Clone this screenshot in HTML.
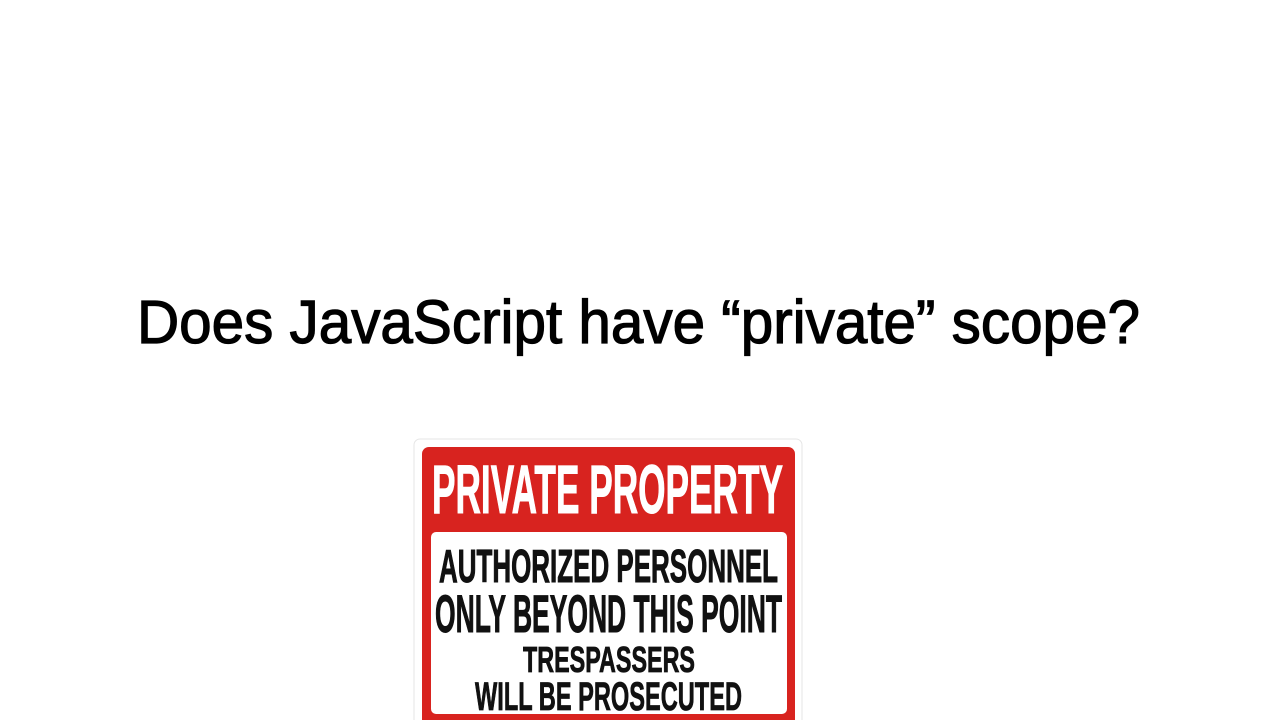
<!DOCTYPE html>
<html><head><meta charset="utf-8"><style>
html,body{margin:0;padding:0;background:#fff;width:1280px;height:720px;overflow:hidden}
svg{display:block}
</style></head><body>
<svg width="1280" height="720" xmlns="http://www.w3.org/2000/svg">
<text x="137" y="343" font-family="Liberation Sans, DejaVu Sans, sans-serif" font-size="61" fill="#000" stroke="#000" stroke-width="1.2" textLength="1003" lengthAdjust="spacingAndGlyphs">Does JavaScript have “private” scope?</text>
<rect x="414" y="439" width="388" height="290" rx="6" fill="#fff" stroke="#e6e6e6" stroke-width="1"/>
<rect x="422" y="447" width="373" height="280" rx="7" fill="#d8231f"/>
<rect x="431" y="532" width="356" height="182" rx="5" fill="#fff"/>
<g font-family="Liberation Sans, sans-serif" font-weight="bold">
<text x="432" y="513" font-size="69" fill="#fff" stroke="#fff" stroke-width="1" textLength="351" lengthAdjust="spacingAndGlyphs">PRIVATE PROPERTY</text>
<text x="439" y="582" font-size="46" fill="#111" stroke="#111" stroke-width="1" textLength="339" lengthAdjust="spacingAndGlyphs">AUTHORIZED PERSONNEL</text>
<text x="435" y="632" font-size="53" fill="#111" stroke="#111" stroke-width="1" textLength="347" lengthAdjust="spacingAndGlyphs">ONLY BEYOND THIS POINT</text>
<text x="523" y="672" font-size="36" fill="#111" stroke="#111" stroke-width="0.8" textLength="172" lengthAdjust="spacingAndGlyphs">TRESPASSERS</text>
<text x="475" y="710" font-size="40" fill="#111" stroke="#111" stroke-width="0.8" textLength="267" lengthAdjust="spacingAndGlyphs">WILL BE PROSECUTED</text>
</g>
</svg>
</body></html>
